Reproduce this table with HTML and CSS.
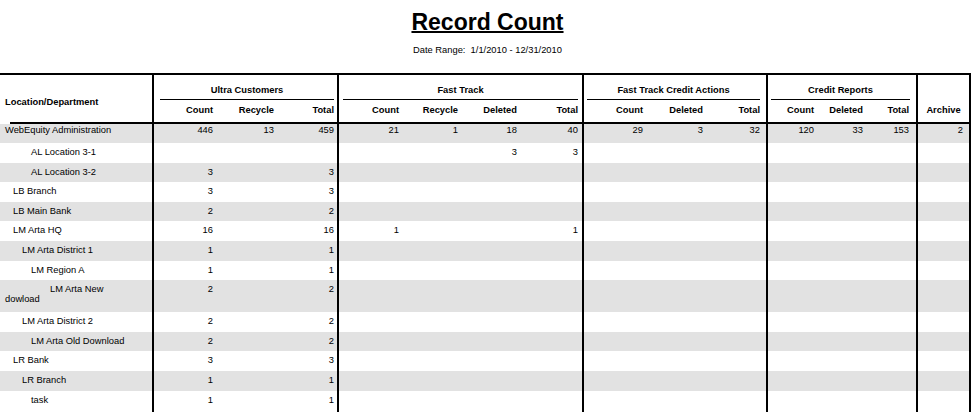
FILE: index.html
```html
<!DOCTYPE html>
<html lang="en">
<head>
<meta charset="utf-8">
<title>Record Count</title>
<link rel="stylesheet" href="styles.css">
</head>
<body>
<div class="report">
  <h1 class="title">Record Count</h1>
  <p class="range">Date Range:&nbsp; 1/1/2010 - 12/31/2010</p>

  <div class="grid" role="table">
    <div class="h-loc">Location/Department</div>
    <div class="h-group g-uc"><span class="gt">Ultra Customers</span></div>
    <div class="h-group g-ft"><span class="gt">Fast Track</span></div>
    <div class="h-group g-fca"><span class="gt">Fast Track Credit Actions</span></div>
    <div class="h-group g-cr"><span class="gt">Credit Reports</span></div>
    <div class="h-arch">Archive</div>

    <div class="h-sub">Count</div>
    <div class="h-sub">Recycle</div>
    <div class="h-sub end p3">Total</div>
    <div class="h-sub">Count</div>
    <div class="h-sub">Recycle</div>
    <div class="h-sub">Deleted</div>
    <div class="h-sub end p4">Total</div>
    <div class="h-sub">Count</div>
    <div class="h-sub">Deleted</div>
    <div class="h-sub end p6">Total</div>
    <div class="h-sub">Count</div>
    <div class="h-sub">Deleted</div>
    <div class="h-sub end p7">Total</div>

    <div class="rule"></div>

    <div class="row alt first"><div class="loc">WebEquity Administration</div><div>446</div><div>13</div><div>459</div><div>21</div><div>1</div><div>18</div><div>40</div><div>29</div><div>3</div><div>32</div><div>120</div><div>33</div><div>153</div><div>2</div></div>
    <div class="row"><div class="loc i3">AL Location 3-1</div><div></div><div></div><div></div><div></div><div></div><div>3</div><div>3</div><div></div><div></div><div></div><div></div><div></div><div></div><div></div></div>
    <div class="row alt"><div class="loc i3">AL Location 3-2</div><div>3</div><div></div><div>3</div><div></div><div></div><div></div><div></div><div></div><div></div><div></div><div></div><div></div><div></div><div></div></div>
    <div class="row"><div class="loc i1">LB Branch</div><div>3</div><div></div><div>3</div><div></div><div></div><div></div><div></div><div></div><div></div><div></div><div></div><div></div><div></div><div></div></div>
    <div class="row alt"><div class="loc i1">LB Main Bank</div><div>2</div><div></div><div>2</div><div></div><div></div><div></div><div></div><div></div><div></div><div></div><div></div><div></div><div></div><div></div></div>
    <div class="row"><div class="loc i1">LM Arta HQ</div><div>16</div><div></div><div>16</div><div>1</div><div></div><div></div><div>1</div><div></div><div></div><div></div><div></div><div></div><div></div><div></div></div>
    <div class="row alt"><div class="loc i2">LM Arta District 1</div><div>1</div><div></div><div>1</div><div></div><div></div><div></div><div></div><div></div><div></div><div></div><div></div><div></div><div></div><div></div></div>
    <div class="row"><div class="loc i3">LM Region A</div><div>1</div><div></div><div>1</div><div></div><div></div><div></div><div></div><div></div><div></div><div></div><div></div><div></div><div></div><div></div></div>
    <div class="row alt"><div class="loc i5">LM Arta New dowload</div><div>2</div><div></div><div>2</div><div></div><div></div><div></div><div></div><div></div><div></div><div></div><div></div><div></div><div></div><div></div></div>
    <div class="row"><div class="loc i2">LM Arta District 2</div><div>2</div><div></div><div>2</div><div></div><div></div><div></div><div></div><div></div><div></div><div></div><div></div><div></div><div></div><div></div></div>
    <div class="row alt"><div class="loc i3">LM Arta Old Download</div><div>2</div><div></div><div>2</div><div></div><div></div><div></div><div></div><div></div><div></div><div></div><div></div><div></div><div></div><div></div></div>
    <div class="row"><div class="loc i1">LR Bank</div><div>3</div><div></div><div>3</div><div></div><div></div><div></div><div></div><div></div><div></div><div></div><div></div><div></div><div></div><div></div></div>
    <div class="row alt"><div class="loc i2">LR Branch</div><div>1</div><div></div><div>1</div><div></div><div></div><div></div><div></div><div></div><div></div><div></div><div></div><div></div><div></div><div></div></div>
    <div class="row"><div class="loc i3">task</div><div>1</div><div></div><div>1</div><div></div><div></div><div></div><div></div><div></div><div></div><div></div><div></div><div></div><div></div><div></div></div>
  </div>
</div>
</body>
</html>
```

FILE: styles.css
```css
html, body {
  margin: 0;
  padding: 0;
  background: #ffffff;
}

body {
  font-family: "Liberation Sans", Arial, sans-serif;
  font-size: 9.33px;
  color: #000000;
  overflow: hidden;
}

.report {
  width: 975px;
}

.title {
  margin: 0;
  padding-top: 8px;
  font-size: 23px;
  line-height: 29px;
  font-weight: bold;
  text-align: center;
  text-decoration: underline;
  text-decoration-thickness: 2px;
}

.range {
  margin: 7px 0 17px;
  line-height: 12px;
  text-align: center;
}

.grid {
  display: grid;
  width: 971px;
  grid-template-columns: 154px 63px 61px 61px 64px 59px 59px 63px 63px 60px 61px 50px 49px 51px 53px;
  grid-template-rows: 25px 22px 2px 19px repeat(7, 19.6px) 32px repeat(4, 19.6px) 22px;
  border-top: 2px solid #000;
}

.grid > div,
.row > div {
  box-sizing: border-box;
}

/* header */
.h-loc {
  grid-column: 1;
  grid-row: 1 / span 2;
  padding: 21px 0 0 5px;
  line-height: 12px;
  font-weight: bold;
  border-right: 2px solid #000;
}

.h-group {
  grid-row: 1;
  padding-top: 9px;
  text-align: center;
  font-weight: bold;
  border-right: 2px solid #000;
}

.gt {
  display: block;
  line-height: 12px;
  padding-bottom: 3px;
  border-bottom: 1px solid #000;
}

.g-uc { grid-column: 2 / 5; }
.g-uc .gt { margin: 0 3px 0 6px; }
.g-ft { grid-column: 5 / 9; }
.g-ft .gt { margin: 0 4px 0 4px; }
.g-fca { grid-column: 9 / 12; }
.g-fca .gt { margin: 0 6px 0 3px; }
.g-cr { grid-column: 12 / 15; }
.g-cr .gt { margin: 0 6px 0 3px; }

.h-arch {
  grid-column: 15;
  grid-row: 1 / span 2;
  padding-top: 29px;
  line-height: 12px;
  text-align: center;
  font-weight: bold;
  border-right: 2px solid #000;
}

.h-sub {
  grid-row: 2;
  padding: 4px 4px 0 0;
  line-height: 12px;
  text-align: right;
  font-weight: bold;
}

.h-sub.end { border-right: 2px solid #000; }
.p3 { padding-right: 3px; }
.p4 { padding-right: 4px; }
.p6 { padding-right: 6px; }
.p7 { padding-right: 7px; }

.rule {
  grid-column: 1 / -1;
  grid-row: 3;
  margin-left: 10px;
  background: #000;
}

/* body rows */
.row {
  display: contents;
}

.row > div {
  padding: 4px 4px 0 0;
  line-height: 10px;
  text-align: right;
  white-space: nowrap;
}

.row.first > div {
  padding-top: 1px;
}

.row.alt > div {
  background: #e2e2e2;
}

.row > div:nth-child(1),
.row > div:nth-child(4),
.row > div:nth-child(8),
.row > div:nth-child(11),
.row > div:nth-child(14),
.row > div:nth-child(15) {
  border-right: 2px solid #000;
}

.row > div:nth-child(4) { padding-right: 3px; }
.row > div:nth-child(8) { padding-right: 4px; }
.row > div:nth-child(11) { padding-right: 6px; }
.row > div:nth-child(14) { padding-right: 7px; }
.row > div:nth-child(15) { padding-right: 6px; }

.row > .loc {
  padding-left: 5px;
  padding-right: 19px;
  text-align: left;
  white-space: normal;
}

.i1 { text-indent: 8px; }
.i2 { text-indent: 17px; }
.i3 { text-indent: 26px; }
.i5 { text-indent: 45px; }
```
